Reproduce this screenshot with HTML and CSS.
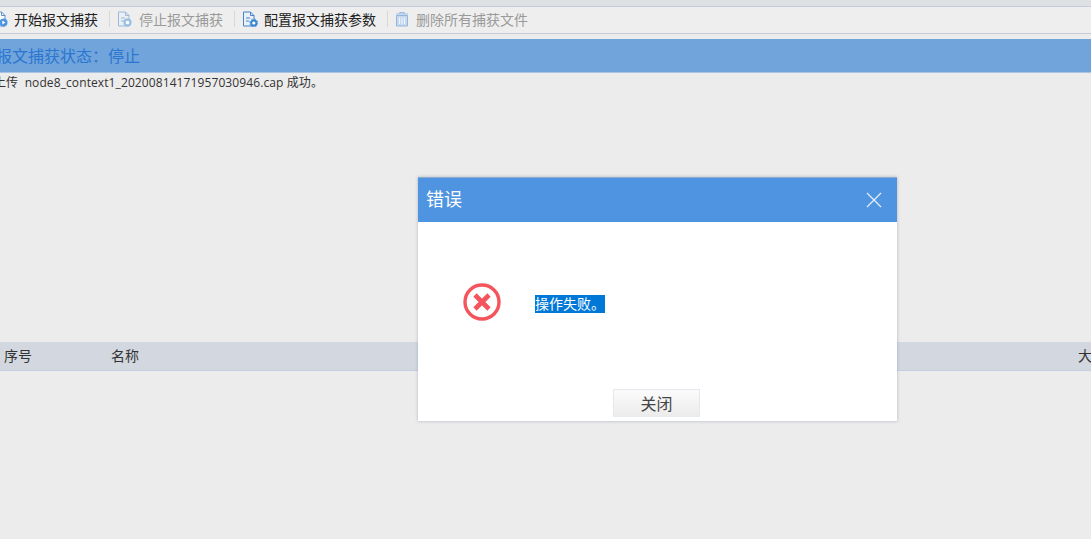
FILE: index.html
```html
<!DOCTYPE html>
<html lang="zh-CN">
<head>
<meta charset="utf-8">
<title>报文捕获</title>
<link rel="stylesheet" href="styles.css">
</head>
<body>
<div class="page">
  <div class="topstrip"></div>
  <div class="toolbar">
    <div class="tool tool-first">
      <svg class="icon" viewBox="0 0 16 16"><path d="M2.500 1h7l3.500 3.500V15H2.500z" fill="#fff" stroke="#5b8fc9"/><path d="M9.500 1v3.500H13" fill="none" stroke="#5b8fc9"/><circle cx="11.500" cy="11.500" r="4" fill="#4f94e0"/><path d="M10.300 9.500l3 2-3 2z" fill="#fff"/></svg>
      <span>开始报文捕获</span>
    </div>
    <div class="sep"></div>
    <div class="tool tool-off">
      <svg class="icon dim" viewBox="0 0 16 16"><path d="M2.500 1h7l3.500 3.500V15H2.500z" fill="#e8f0fa" stroke="#5b8fc9"/><path d="M9.500 1v3.500H13" fill="none" stroke="#5b8fc9"/><path d="M5 7h4M5 10h3" stroke="#5b8fc9"/><circle cx="11.500" cy="11.500" r="4" fill="#4f94e0"/><rect x="9.800" y="9.800" width="3.400" height="3.400" fill="#fff"/></svg>
      <span>停止报文捕获</span>
    </div>
    <div class="sep"></div>
    <div class="tool tool-config">
      <svg class="icon" viewBox="0 0 16 16"><path d="M1.500 1h7l3.500 3.500V15H1.500z" fill="#e8f0fa" stroke="#4a84c4"/><path d="M8.500 1v3.500H12" fill="none" stroke="#4a84c4"/><path d="M4 7h4M4 10h3" stroke="#4a84c4"/><circle cx="11.800" cy="12" r="2.600" fill="#fff" stroke="#3b86d6" stroke-width="2"/><circle cx="11.800" cy="12" r="4" fill="none" stroke="#3b86d6" stroke-width="1" stroke-dasharray="1.500 1.640"/></svg>
      <span>配置报文捕获参数</span>
    </div>
    <div class="sep"></div>
    <div class="tool tool-off tool-trash">
      <svg class="icon trash" viewBox="0 0 14 16"><path d="M1 3h12M5 3V1.500h4V3" fill="none" stroke="#9dbce0" stroke-width="1.200"/><path d="M1.500 4.500h11V15h-11z" fill="#c6d9ee" stroke="#94b6de"/><path d="M4.500 6.500v6.500M7 6.500v6.500M9.500 6.500v6.500" stroke="#eef4fb"/></svg>
      <span>删除所有捕获文件</span>
    </div>
  </div>
  <div class="statusbar">报文捕获状态&#xFF1A;停止</div>
  <div class="message">上传&nbsp;&nbsp;node8_context1_20200814171957030946.cap 成功。</div>
  <div class="tablehead">
    <span class="col-no">序号</span>
    <span class="col-name">名称</span>
    <span class="col-size">大小</span>
  </div>
</div>
<div class="dialog">
  <div class="dialog-head">
    <span class="dialog-title">错误</span>
    <svg class="dialog-close" viewBox="0 0 16 16"><path d="M1 1l14 14M15 1L1 15" stroke="#e3eefb" stroke-width="1.300" fill="none"/></svg>
  </div>
  <div class="dialog-body">
    <svg class="err-icon" viewBox="0 0 38 38"><circle cx="19" cy="19" r="17" fill="#fff" stroke="#f4545b" stroke-width="3.400"/><path d="M12 12l14 14M26 12L12 26" stroke="#f4545b" stroke-width="4.600" fill="none"/></svg>
    <span class="err-text">操作失败。</span>
  </div>
  <div class="dialog-foot"><button class="btn" type="button">关闭</button></div>
</div>
</body>
</html>
```
FILE: styles.css
```css
* { box-sizing: border-box; }
html, body { margin: 0; height: 100%; overflow: hidden; background: #ececec; }
body { font-family: "Noto Sans CJK SC", "Liberation Sans", sans-serif; color: #333; }
.page { width: 1100px; display: flex; flex-direction: column; }
.topstrip { height: 7px; background: #dfe0e4; border-bottom: 1px solid #c7cde0; }
.toolbar { height: 27px; background: #eeeeee; border-bottom: 1px solid #c9cbd3; display: flex; align-items: center; font-size: 14px; color: #222; margin-left: -8px; padding-bottom: 2px; }
.tool { display: flex; align-items: center; gap: 6px; }
.tool span { line-height: 20px; }
.tool-off { color: #9a9a9a; }
.tool-off span { margin-left: 1px; }
.icon { width: 16px; height: 16px; flex: none; }
.trash { width: 14px; }
.dim { opacity: .55; }
.sep { width: 1px; height: 16px; background: #d8d8d8; margin: 0 6px 0 11px; }
.toolbar .sep:nth-child(4) { margin-right: 7px; }
.toolbar .sep:nth-child(6) { margin-right: 7px; }
.statusbar { margin-top: 5px; height: 34px; background: #70a4da; border-bottom: 1px solid #a9c4e2; color: #2a76d2; font-size: 16px; line-height: 33px; margin-left: -4px; }
.message { font-family: "Open Sans", "Noto Sans CJK SC", sans-serif; font-size: 12px; line-height: 20px; height: 269px; margin-left: -6px; letter-spacing: .1px; color: #333; white-space: pre; }
.tablehead { height: 29px; background: #d3d8e0; border-bottom: 1px solid #c5cde0; font-size: 14px; line-height: 26px; color: #333; display: flex; padding-left: 4px; }
.tablehead span { flex: none; white-space: nowrap; }
.col-no { width: 107px; }
.col-name { width: 967px; }
.dialog { position: absolute; left: 418px; top: 177px; width: 479px; height: 244px; background: #fff; display: flex; flex-direction: column; box-shadow: 0 0 3px rgba(120,130,160,.55); }
.dialog-head { height: 45px; background: #4f94e0; border-top: 1px solid #8eaccf; display: flex; align-items: center; justify-content: space-between; padding: 0 15px 0 8px; }
.dialog-title { color: #fff; font-size: 18px; line-height: 38px; margin-top: -5px; }
.dialog-close { width: 16px; height: 16px; }
.dialog-body { height: 167px; padding: 61px 0 0 45px; display: flex; align-items: flex-start; }
.err-icon { width: 38px; height: 38px; flex: none; }
.err-text { margin: 12px 0 0 34px; background: #0078d7; color: #fff; font-size: 14px; line-height: 16px; height: 18px; width: 70px; white-space: nowrap; }
.dialog-foot { display: flex; justify-content: center; }
.btn { width: 87px; height: 28px; margin: 0 0 0 -2px; padding: 0; border: 1px solid #e3e8ef; border-bottom-color: #e8ecf2; background: linear-gradient(#fbfbfb, #ececec); color: #444; font: 16px "Noto Sans CJK SC", sans-serif; }
```
